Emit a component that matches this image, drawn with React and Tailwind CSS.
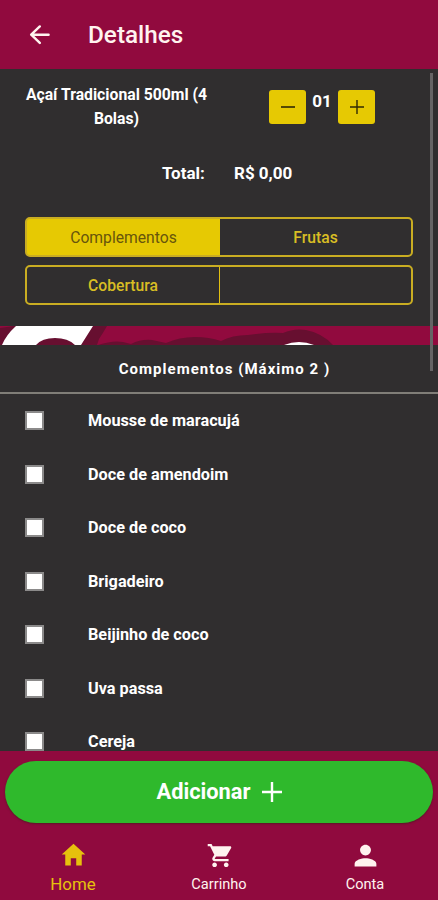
import { IoMdHome, IoMdCart, IoMdPerson } from "react-icons/io";

const extras = [
    "Mousse de maracujá",
    "Doce de amendoim",
    "Doce de coco",
    "Brigadeiro",
    "Beijinho de coco",
    "Uva passa",
    "Cereja",
];

function PlusIcon({ className, strokeWidth }) {
    return (
        <svg viewBox="0 0 20 20" className={className} fill="none" stroke="currentColor" strokeWidth={strokeWidth}>
            <path d="M10 0v20M0 10h20" />
        </svg>
    );
}

function Header() {
    return (
        <header className="flex h-[69px] shrink-0 items-center bg-[#910a3e] pl-[29px] text-[#fff3ef]">
            <svg viewBox="0 0 22 20" className="h-5 w-[22px]" fill="none" stroke="currentColor" strokeWidth="2.4" strokeLinecap="round" strokeLinejoin="round">
                <path d="M10.8 1.4L2.2 9.7l8.6 8.2M2.6 9.7h17" />
            </svg>
            <h1 className="ml-[37px] text-[24.3px] leading-8 font-medium">Detalhes</h1>
        </header>
    );
}

function Product() {
    return (
        <section className="h-[257px] shrink-0 bg-[#302e2f] px-[25px]">
            <div className="flex h-[70px]">
                <h2 className="mt-[14px] w-[183px] text-center text-[15.75px] leading-6 font-bold">
                    Açaí Tradicional 500ml (4 Bolas)
                </h2>
                {/* Quantity */}
                <div className="mt-[21px] ml-[61px] flex">
                    <button className="flex h-[34px] w-[37px] items-center justify-center rounded-[3px] bg-[#e6c903] text-[#302a05]">
                        <svg viewBox="0 0 14 14" className="size-3.5" stroke="currentColor" strokeWidth="1.6">
                            <path d="M0 7h14" />
                        </svg>
                    </button>
                    <span className="w-8 text-center text-[17px] leading-[23px] font-bold">01</span>
                    <button className="flex h-[34px] w-[37px] items-center justify-center rounded-[3px] bg-[#e6c903] text-[#302a05]">
                        <PlusIcon className="size-3.5" strokeWidth="2" />
                    </button>
                </div>
            </div>
            <div className="mt-[22px] flex pl-[137px] text-[17px] leading-6 font-bold">
                <span className="w-[72px]">Total:</span>
                <span>R$ 0,00</span>
            </div>
            {/* Categories */}
            <div className="mt-8 flex flex-col gap-2 text-[15.7px] font-medium text-[#d8bd24]">
                <div className="flex h-10 overflow-hidden rounded-[5px] border-2 border-[#c9ad22] bg-[linear-gradient(90deg,#e6c903_193px,#302e2f_193px)] bg-origin-padding">
                    <button className="w-[193px] pt-0.5 font-normal text-[#67550c]">Complementos</button>
                    <button className="flex-1 pt-0.5">Frutas</button>
                </div>
                <div className="flex h-10 overflow-hidden rounded-[5px] border-2 border-[#c9ad22]">
                    <button className="w-[193px] border-r-[1.5px] border-[#e0bf12] pt-0.5">Cobertura</button>
                    <button className="flex-1" />
                </div>
            </div>
        </section>
    );
}

// Visible slice of the store banner between the two panels
function Banner() {
    return (
        <svg viewBox="0 0 438 19" className="block h-[19px] w-full shrink-0 bg-[#910a3e]">
            <path d="M0 2L14 0H107Q103 7 99 13L97 19H0z" fill="#670f30" />
            <path d="M16 0H93L81 19H75Q68 12 55 12T36 19H2Q6 9 16 0z" fill="#fff" />
            <path d="M98 19Q113 14 123 16L131 18Q141 13 152 14L166 17Q179 11 195 11Q209 11 221 15Q232 9 248 9Q269 6 283 7Q294 2 306 4Q322 7 333 19z" fill="#670f30" />
            <path d="M284 19Q299 13 314 19z" fill="#fff" />
        </svg>
    );
}

function ExtrasList() {
    return (
        <section className="h-[406px] shrink-0 overflow-hidden bg-[#302e2f]">
            <h3 className="h-[49px] border-b-2 border-[#807e78] pl-[11px] text-center text-[15px] leading-[48px] font-bold tracking-[1.03px]">
                Complementos (Máximo 2 )
            </h3>
            <ul>
                {extras.map((name) => (
                    <li key={name} className="flex h-[53.5px] items-center pl-[25px] text-[16.25px] font-bold">
                        <input type="checkbox" className="size-[19px] appearance-none border-2 border-[#8b8a8a] bg-white" />
                        <span className="ml-11 pt-px">{name}</span>
                    </li>
                ))}
            </ul>
        </section>
    );
}

function Footer() {
    return (
        <footer className="h-[149px] shrink-0 bg-[#900a3e] pt-[9.5px]">
            <button className="mx-[5px] flex h-[62.5px] w-[428px] items-center justify-center gap-3 rounded-full bg-[#2fb92c] pl-px text-[21.8px] font-bold shadow-[0_1px_2px_#5b1728]">
                <span className="pt-0.5">Adicionar</span>
                <PlusIcon className="size-5" strokeWidth="2.4" />
            </button>
            <nav className="mt-2 grid h-[69px] grid-cols-3 text-[#fff3ef]">
                <a className="flex flex-col items-center pt-[9px] text-[#e6c10d]">
                    <IoMdHome className="size-[29px]" />
                    <span className="pt-px text-[16.9px] leading-7">Home</span>
                </a>
                <a className="flex flex-col items-center pt-[10px]">
                    <IoMdCart className="size-[29px]" />
                    <span className="text-[14.6px] leading-7">Carrinho</span>
                </a>
                <a className="flex flex-col items-center pt-[10px]">
                    <IoMdPerson className="size-[29px]" />
                    <span className="text-[14.6px] leading-7">Conta</span>
                </a>
            </nav>
        </footer>
    );
}

export default function App() {
    return (
        <div className="relative flex h-[900px] w-[438px] flex-col overflow-hidden font-['Roboto',sans-serif] text-white">
            <Header />
            <Product />
            <Banner />
            <ExtrasList />
            <Footer />
            {/* Scroll indicator */}
            <div className="absolute top-[73px] left-[430px] h-[298px] w-[3px] bg-[#666465]" />
        </div>
    );
}
